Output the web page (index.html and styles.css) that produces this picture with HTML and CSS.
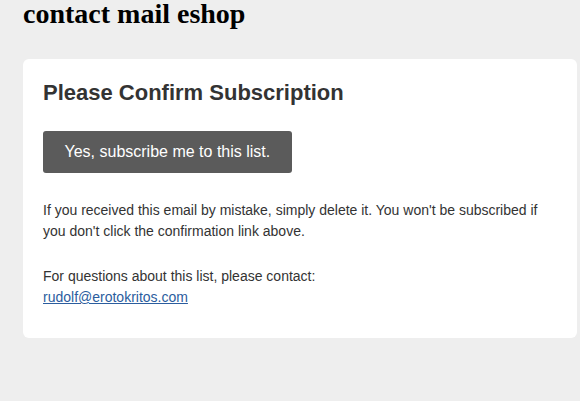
FILE: index.html
```html
<!DOCTYPE html>
<html>
<head>
<meta charset="utf-8">
<link rel="stylesheet" href="styles.css">
</head>
<body>
<h1 class="site-title">contact mail eshop</h1>
<div class="card">
  <h2 class="card-title">Please Confirm Subscription</h2>
  <a class="btn" href="#">Yes, subscribe me to this list.</a>
  <p class="text text-first">If you received this email by mistake, simply delete it. You won't be subscribed if you don't click the confirmation link above.</p>
  <p class="text">For questions about this list, please contact:<br><a class="link" href="#">rudolf@erotokritos.com</a></p>
</div>
</body>
</html>
```
FILE: styles.css
```css
html, body {
  margin: 0;
  padding: 0;
  background: #eeeeee;
}
body {
  width: 580px;
  height: 401px;
  overflow: hidden;
}
.site-title {
  margin: 0;
  padding-left: 23px;
  font-family: "Liberation Serif", "Times New Roman", serif;
  font-size: 28px;
  font-weight: bold;
  line-height: 28px;
  color: #000;
}
.card {
  margin: 31px 0 0 23px;
  width: 554px;
  box-sizing: border-box;
  background: #fff;
  border-radius: 6px;
  padding: 21px 20px 30px;
  font-family: "Liberation Sans", Arial, sans-serif;
  color: #333;
}
.card-title {
  margin: 0 0 26px;
  font-size: 22px;
  font-weight: bold;
  line-height: 25px;
  color: #333;
}
.btn {
  display: inline-block;
  background: #5b5b5b;
  color: #fff;
  text-decoration: none;
  font-size: 16px;
  line-height: 18px;
  padding: 12px 21.5px;
  border-radius: 3px;
}
.text {
  margin: 0;
  font-size: 14px;
  line-height: 21px;
  color: #333;
}
.text-first {
  margin: 27px 0 24px;
}
.link {
  color: #2b5d9e;
  text-decoration: underline;
}
```
